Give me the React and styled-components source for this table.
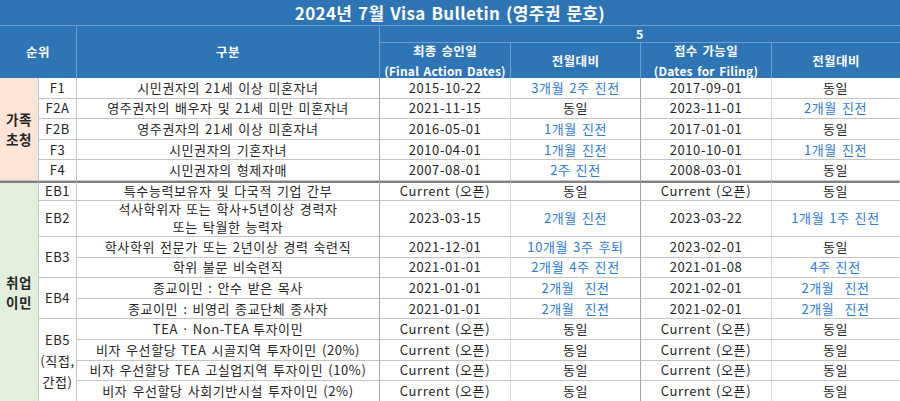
import React from 'react';
import styled, { createGlobalStyle } from 'styled-components';

const GlobalStyle = createGlobalStyle`
  html, body {
    margin: 0;
    padding: 0;
    background: #fff;
    overflow: hidden;
  }
  body {
    font-family: "Noto Sans CJK KR", "Noto Sans", sans-serif;
  }
`;

// column right-border colours, left to right
const VLINES = ['#d0d0d0', '#c4c4c4', '#a6a6a6', '#d6d6d6', '#a6a6a6', '#d6d6d6', 'transparent'];
const BLUE_HEAD = '#2e75b6';
const HEAD_LINE = 'rgba(255,255,255,0.3)';

const Sheet = styled.div`
  display: grid;
  width: 900px;
  grid-template-columns: 39px 38px 303px 131px 130px 131px 128px;
  grid-template-rows: 26px 17px 35px repeat(5, 20.6px) 20px 36px repeat(8, 20.6px);
  color: #262626;
  font-size: 13px;
  letter-spacing: 0.6px;
  word-spacing: 1.5px;
`;

const Title = styled.div`
  grid-column: 1 / -1;
  grid-row: 1;
  display: flex;
  align-items: center;
  justify-content: center;
  background: ${BLUE_HEAD};
  color: #fff;
  font-weight: 700;
  font-size: 17px;
  letter-spacing: 0.35px;
  word-spacing: 1.5px;
  box-sizing: border-box;
  border-bottom: 1px solid ${HEAD_LINE};
`;

const HeadCell = styled.div`
  grid-column: ${p => p.$col};
  grid-row: ${p => p.$row};
  display: flex;
  flex-direction: column;
  align-items: center;
  justify-content: center;
  background: ${BLUE_HEAD};
  color: #fff;
  font-weight: 700;
  font-size: ${p => p.$size || '12.5px'};
  line-height: ${p => p.$lh || '18px'};
  letter-spacing: 0.4px;
  box-sizing: border-box;
  border-right: ${p => (p.$last ? '0' : `1px solid ${HEAD_LINE}`)};
  border-bottom: ${p => (p.$line ? `1px solid ${HEAD_LINE}` : '0')};
`;

const Small = styled.span`
  font-size: 12px;
  letter-spacing: 0.2px;
`;

const Cell = styled.div`
  grid-column: ${p => p.$col};
  grid-row: ${p => p.$row};
  display: flex;
  flex-direction: column;
  align-items: center;
  justify-content: center;
  text-align: center;
  white-space: pre;
  overflow: hidden;
  box-sizing: border-box;
  border-right: 1px solid ${p => VLINES[p.$col - 1]};
  border-bottom: 1px solid #c4c4c4;
  border-top: ${p => (p.$sep ? '2px solid #808080' : '0')};
  background: ${p => p.$bg || '#fff'};
  color: ${p => (p.$blue ? '#2b7bd0' : '#262626')};
  line-height: ${p => p.$lh || '18px'};
`;

const Category = styled(Cell)`
  font-weight: 700;
  font-size: 13.5px;
  line-height: 20px;
  border-right-color: #c4c4c4;
`;

const Tight = styled.span`
  word-spacing: 0;
`;

const family = [
  ['F1', '시민권자의 21세 이상 미혼자녀', '2015-10-22', '3개월 2주 진전', '2017-09-01', '동일'],
  ['F2A', '영주권자의 배우자 및 21세 미만 미혼자녀', '2021-11-15', '동일', '2023-11-01', '2개월 진전'],
  ['F2B', '영주권자의 21세 이상 미혼자녀', '2016-05-01', '1개월 진전', '2017-01-01', '동일'],
  ['F3', '시민권자의 기혼자녀', '2010-04-01', '1개월 진전', '2010-10-01', '1개월 진전'],
  ['F4', '시민권자의 형제자매', '2007-08-01', '2주 진전', '2008-03-01', '동일'],
];

const employment = [
  {
    code: ['EB1'],
    rows: [['특수능력보유자 및 다국적 기업 간부', 'Current (오픈)', '동일', 'Current (오픈)', '동일']],
  },
  {
    code: ['EB2'],
    rows: [[['석사학위자 또는 학사+5년이상 경력자', '또는 탁월한 능력자'], '2023-03-15', '2개월 진전', '2023-03-22', '1개월 1주 진전']],
  },
  {
    code: ['EB3'],
    rows: [
      ['학사학위 전문가 또는 2년이상 경력 숙련직', '2021-12-01', '10개월 3주 후퇴', '2023-02-01', '동일'],
      ['학위 불문 비숙련직', '2021-01-01', '2개월 4주 진전', '2021-01-08', '4주 진전'],
    ],
  },
  {
    code: ['EB4'],
    rows: [
      ['종교이민 : 안수 받은 목사', '2021-01-01', '2개월  진전', '2021-02-01', '2개월  진전'],
      ['종교이민 : 비영리 종교단체 종사자', '2021-01-01', '2개월  진전', '2021-02-01', '2개월  진전'],
    ],
  },
  {
    code: ['EB5', '(직접,', '간접)'],
    lh: '21px',
    rows: [
      [<Tight>TEA · Non-TEA <span>투자이민</span></Tight>, 'Current (오픈)', '동일', 'Current (오픈)', '동일'],
      ['비자 우선할당 TEA 시골지역 투자이민 (20%)', 'Current (오픈)', '동일', 'Current (오픈)', '동일'],
      ['비자 우선할당 TEA 고실업지역 투자이민 (10%)', 'Current (오픈)', '동일', 'Current (오픈)', '동일'],
      ['비자 우선할당 사회기반시설 투자이민 (2%)', 'Current (오픈)', '동일', 'Current (오픈)', '동일'],
    ],
  },
];

const isBlue = (v, i) => (i === 1 || i === 3) && v !== '동일';

function DataCells({ row, values, sep }) {
  return values.map((v, i) => (
    <Cell key={i} $col={i + 4} $row={row} $sep={sep} $blue={isBlue(v, i)}>
      {v}
    </Cell>
  ));
}

function Lines({ text }) {
  const list = Array.isArray(text) ? text : [text];
  return list.map((t, i) => <span key={i}>{t}</span>);
}

export default function App() {
  const cells = [];
  let r = 4;

  family.forEach(([code, desc, ...vals], i) => {
    cells.push(<Cell key={`fc${i}`} $col={2} $row={r}>{code}</Cell>);
    cells.push(<Cell key={`fd${i}`} $col={3} $row={r}>{desc}</Cell>);
    cells.push(<DataCells key={`fv${i}`} row={r} values={vals} />);
    r += 1;
  });

  const ebStart = r;
  employment.forEach((group, g) => {
    const first = r;
    const sep = g === 0;
    cells.push(
      <Cell key={`ec${g}`} $col={2} $row={`${first} / span ${group.rows.length}`} $sep={sep} $lh={group.lh}>
        <Lines text={group.code} />
      </Cell>
    );
    group.rows.forEach(([desc, ...vals], i) => {
      cells.push(
        <Cell key={`ed${g}-${i}`} $col={3} $row={r} $sep={sep}>
          <Lines text={desc} />
        </Cell>
      );
      cells.push(<DataCells key={`ev${g}-${i}`} row={r} values={vals} sep={sep} />);
      r += 1;
    });
  });

  return (
    <>
      <GlobalStyle />
      <Sheet>
        <Title>2024년 7월 Visa Bulletin (영주권 문호)</Title>
        <HeadCell $col="1 / 3" $row="2 / 4">순위</HeadCell>
        <HeadCell $col="3" $row="2 / 4">구분</HeadCell>
        <HeadCell $col="4 / 8" $row="2" $line $last>5</HeadCell>
        <HeadCell $col="4" $row="3" $lh="20px">
          <span>최종 승인일</span>
          <Small>(Final Action Dates)</Small>
        </HeadCell>
        <HeadCell $col="5" $row="3">전월대비</HeadCell>
        <HeadCell $col="6" $row="3" $lh="20px">
          <span>접수 가능일</span>
          <Small>(Dates for Filing)</Small>
        </HeadCell>
        <HeadCell $col="7" $row="3" $last>전월대비</HeadCell>

        <Category $col={1} $row={`4 / span ${family.length}`} $bg="#fce4d6">
          <span>가족</span>
          <span>초청</span>
        </Category>
        <Category $col={1} $row={`${ebStart} / span 10`} $bg="#e2efda" $sep>
          <span>취업</span>
          <span>이민</span>
        </Category>
        {cells}
      </Sheet>
    </>
  );
}
